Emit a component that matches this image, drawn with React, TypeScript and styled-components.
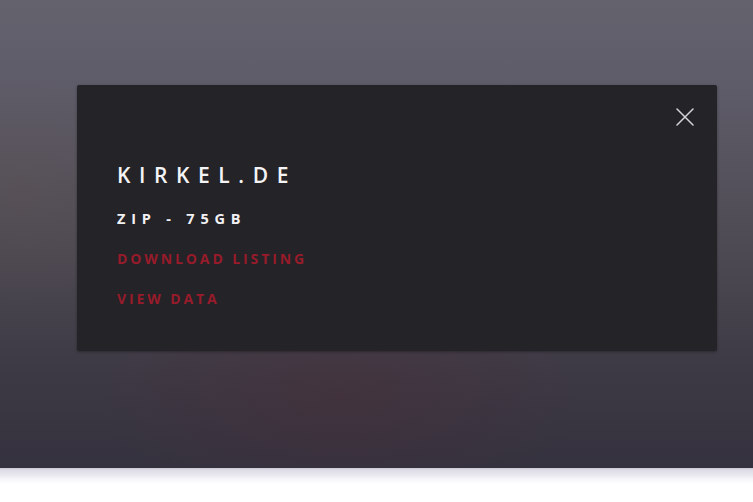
import styled, { createGlobalStyle } from "styled-components";

const GlobalStyle = createGlobalStyle`
    html, body {
        margin: 0;
        padding: 0;
        background: #ffffff;
        font-family: "Open Sans", "Liberation Sans", sans-serif;
    }
    * {
        box-sizing: border-box;
    }
`;

const Page = styled.div`
    width: 100%;
    min-height: 502px;
    display: flex;
    flex-direction: column;
`;

const Hero = styled.section`
    height: 468px;
    padding: 85px 36px 0 77px;
    background:
        radial-gradient(ellipse 45% 35% at 45% 85%, rgba(80, 40, 50, 0.3), rgba(80, 40, 50, 0) 70%),
        radial-gradient(ellipse 25% 35% at 3% 40%, rgba(110, 80, 60, 0.12), rgba(110, 80, 60, 0) 70%),
        linear-gradient(180deg, #63626d 0%, #5d5b67 20%, #4d4952 55%, #3d3944 80%, #34323e 100%);
`;

const Modal = styled.div`
    position: relative;
    width: 640px;
    height: 266px;
    padding: 75px 40px 0 40px;
    background: #242328;
    border-radius: 2px;
    box-shadow: 0 1px 3px rgba(0, 0, 0, 0.35);
    display: flex;
    flex-direction: column;
    align-items: flex-start;
`;

const CloseButton = styled.button`
    position: absolute;
    top: 22px;
    right: 22px;
    width: 20px;
    height: 20px;
    padding: 0;
    border: none;
    background: none;
    cursor: pointer;
    display: flex;
    align-items: center;
    justify-content: center;
`;

const Title = styled.h2`
    margin: 0;
    font-size: 21px;
    font-weight: 600;
    line-height: 30px;
    letter-spacing: 8.6px;
    color: #f4f4f6;
`;

const Meta = styled.div`
    margin-top: 19px;
    font-size: 14.5px;
    font-weight: 700;
    line-height: 20px;
    letter-spacing: 5.8px;
    color: #f1f1f3;
`;

const ActionLink = styled.a`
    margin-top: 20px;
    font-size: 14px;
    font-weight: 700;
    line-height: 20px;
    letter-spacing: 2.9px;
    color: #971b2a;
    text-decoration: none;
    cursor: pointer;
`;

const Footer = styled.footer`
    flex: 1;
    height: 34px;
    background: linear-gradient(180deg, #c9c7d1 0px, #dedce6 2px, #e6e4ec 6px, #f6f5f9 11px, #ffffff 16px);
`;

function CloseIcon() {
    return (
        <svg width="18" height="18" viewBox="0 0 18 18" fill="none">
            <path d="M1 1L17 17M17 1L1 17" stroke="#d6d6da" strokeWidth="1.5" strokeLinecap="round" />
        </svg>
    );
}

function App() {
    return (
        <Page>
            <GlobalStyle />
            <Hero>
                <Modal>
                    <CloseButton aria-label="Close">
                        <CloseIcon />
                    </CloseButton>
                    <Title>KIRKEL.DE</Title>
                    <Meta>ZIP - 75GB</Meta>
                    <ActionLink>DOWNLOAD LISTING</ActionLink>
                    <ActionLink>VIEW DATA</ActionLink>
                </Modal>
            </Hero>
            <Footer />
        </Page>
    );
}

export default App;
